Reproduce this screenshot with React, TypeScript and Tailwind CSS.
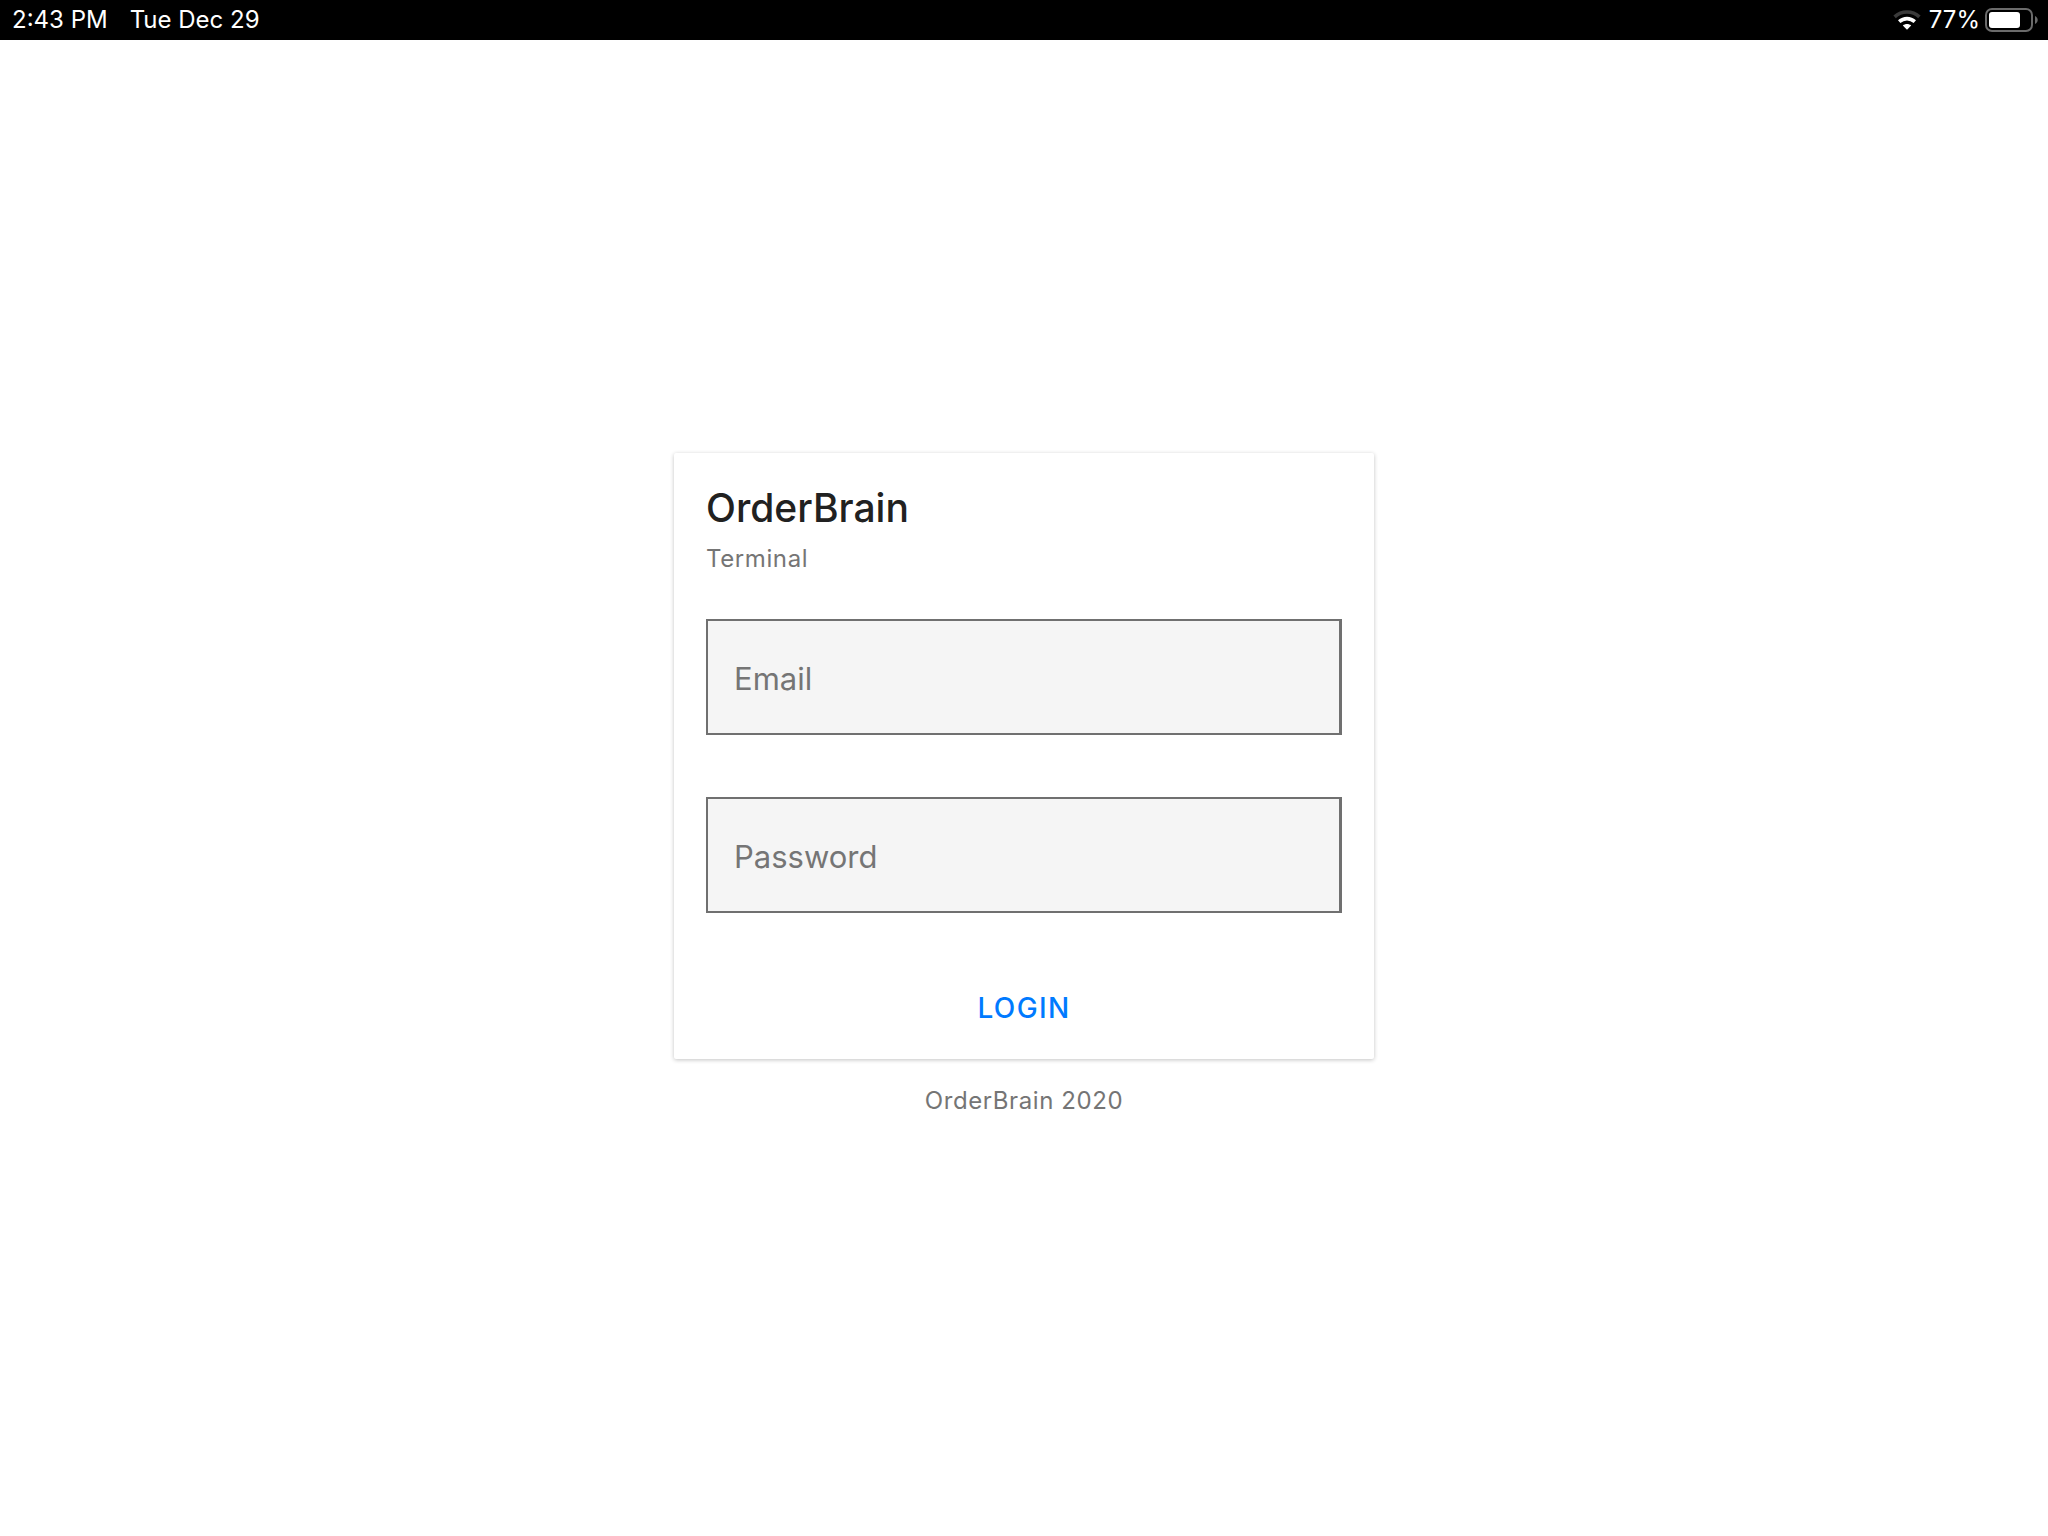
import React from "react";

function WifiIcon() {
  return (
    <svg className="h-5 w-7" viewBox="0 0 28 20" fill="none" aria-hidden="true">
      <path d="M1.6 6.8C8.6 0.4 19.4 0.4 26.4 6.8" stroke="#3a3a3a" strokeWidth="3.6" />
      <path d="M6.2 11.7C10.8 7.6 17.2 7.6 21.8 11.7" stroke="#fff" strokeWidth="3.6" />
      <path d="M14 19.8 9.8 15.6C12.3 13.6 15.7 13.6 18.2 15.6Z" fill="#fff" />
    </svg>
  );
}

function BatteryIcon() {
  return (
    <svg className="h-6 w-[53px]" viewBox="0 0 53 24" fill="none" aria-hidden="true">
      <rect x="1" y="1" width="46" height="22" rx="6" stroke="#6b6b6b" strokeWidth="2" />
      <rect x="4" y="4" width="31" height="16" rx="3" fill="#fff" />
      <path d="M50 8C53.6 9.4 53.6 14.6 50 16Z" fill="#6b6b6b" />
    </svg>
  );
}

function StatusBar() {
  return (
    <header className="flex h-10 items-center justify-between bg-black pr-[10px] pl-3 text-2xl text-white">
      <div className="flex gap-[22px]">
        <span>2:43 PM</span>
        <span>Tue Dec 29</span>
      </div>
      <div className="flex items-center gap-2">
        <WifiIcon />
        <div className="flex items-center gap-[5px]">
          <span>77%</span>
          <BatteryIcon />
        </div>
      </div>
    </header>
  );
}

function Field({ id, label, type }: { id: string; label: string; type: string }) {
  return (
    <div className="relative">
      <input
        id={id}
        type={type}
        placeholder=" "
        className="peer block h-[116px] w-full border-2 border-r-3 border-[#707070] bg-[#f5f5f5] px-[26px] pt-1 text-[31px] text-[#212121] outline-none"
      />
      <label
        htmlFor={id}
        className="pointer-events-none absolute inset-0 hidden items-center pt-1 pl-7 text-[31px] text-[#757575] peer-placeholder-shown:flex"
      >
        {label}
      </label>
    </div>
  );
}

export default function App() {
  return (
    <div className="flex min-h-screen flex-col bg-white font-['Inter',sans-serif]">
      <StatusBar />
      <main className="flex flex-1 flex-col items-center justify-center">
        <form
          className="w-full max-w-[700px] rounded-xs bg-white px-8 pt-8 pb-3 shadow-[0_1px_4px_rgba(0,0,0,0.24)]"
          onSubmit={(e) => e.preventDefault()}
        >
          <h1 className="text-[39px] leading-[46px] font-medium text-[#212121]">OrderBrain</h1>
          <p className="mt-3 text-2xl leading-8 tracking-wide text-[#757575]">Terminal</p>
          <div className="mt-11 flex flex-col gap-[62px]">
            <Field id="email" label="Email" type="email" />
            <Field id="password" label="Password" type="password" />
          </div>
          <div className="mt-14 flex justify-center">
            <button type="submit" className="h-[78px] px-4 text-[28px] font-medium tracking-wider text-[#007aff]">
              LOGIN
            </button>
          </div>
        </form>
        <p className="mt-[22px] pb-0.5 text-2xl leading-10 tracking-wide text-[#757575]">OrderBrain 2020</p>
      </main>
    </div>
  );
}
